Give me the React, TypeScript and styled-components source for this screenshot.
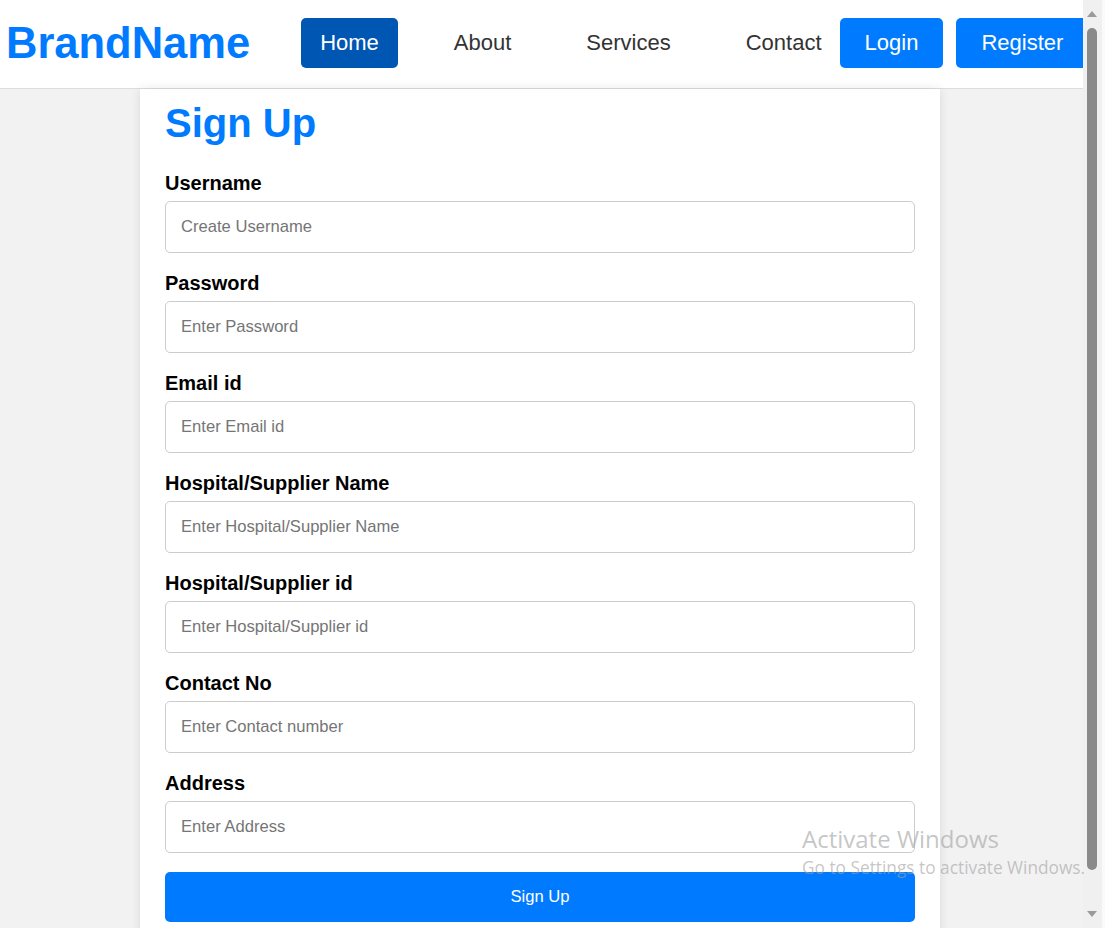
import React from "react";
import styled, { createGlobalStyle } from "styled-components";

const GlobalStyle = createGlobalStyle`
  html, body {
    margin: 0;
    padding: 0;
    height: 100%;
    overflow: hidden;
  }
  body {
    font-family: Arial, "Liberation Sans", sans-serif;
  }
  * { box-sizing: border-box; }
`;

const Shell = styled.div`
  position: relative;
  display: flex;
  height: 100vh;
  width: 100vw;
`;

const Viewport = styled.div`
  flex: 1;
  overflow: hidden;
  background: #f2f2f2;
`;

const Header = styled.header`
  height: 89px;
  background: #ffffff;
  border-bottom: 1px solid #dddddd;
  display: flex;
  align-items: flex-start;
  padding: 18px 0 0 6px;
  white-space: nowrap;
`;

const Brand = styled.div`
  font-size: 43.5px;
  font-weight: 700;
  color: #007bff;
  line-height: 50px;
  margin-right: 51px;
`;

const Nav = styled.nav`
  display: flex;
  gap: 37px;
`;

const NavItem = styled.a<{ $active?: boolean }>`
  display: block;
  height: 50px;
  line-height: 50px;
  padding: 0 19px;
  font-size: 22px;
  border-radius: 5px;
  text-decoration: none;
  color: ${(p) => (p.$active ? "#ffffff" : "#333333")};
  background: ${(p) => (p.$active ? "#0056b3" : "transparent")};
`;

const AuthGroup = styled.div`
  display: flex;
  gap: 13px;
  margin-left: -1px;
`;

const AuthButton = styled.button`
  height: 50px;
  padding: 0 25px;
  border: none;
  border-radius: 5px;
  background: #007bff;
  color: #ffffff;
  font-family: Arial, "Liberation Sans", sans-serif;
  font-size: 22px;
  flex: none;
`;

const Card = styled.main`
  width: 800px;
  margin: 0 0 0 140px;
  background: #ffffff;
  box-shadow: 0 0 10px rgba(0, 0, 0, 0.1);
  padding: 11px 25px 25px;
`;

const Title = styled.h2`
  margin: 0 0 26px;
  font-size: 40px;
  line-height: 46px;
  font-weight: 700;
  color: #007bff;
`;

const Form = styled.form`
  display: flex;
  flex-direction: column;
  gap: 19px;
`;

const Field = styled.div`
  display: flex;
  flex-direction: column;
  gap: 6px;
`;

const Label = styled.label`
  font-size: 20px;
  line-height: 23px;
  font-weight: 700;
  color: #000000;
`;

const Input = styled.input`
  height: 52px;
  width: 100%;
  border: 1px solid #cccccc;
  border-radius: 5px;
  padding: 0 15px;
  font-family: Arial, "Liberation Sans", sans-serif;
  font-size: 16.6px;
  color: #333;
  outline: none;
  &::placeholder {
    color: #757575;
  }
`;

const Submit = styled.button`
  height: 50px;
  width: 100%;
  border: none;
  border-radius: 5px;
  background: #007bff;
  color: #ffffff;
  font-family: Arial, "Liberation Sans", sans-serif;
  font-size: 16.6px;
`;

const Watermark = styled.div`
  position: absolute;
  left: 802px;
  top: 823px;
  color: rgba(160, 160, 160, 0.6);
  font-family: "Open Sans", "Noto Sans", sans-serif;
  pointer-events: none;
  white-space: nowrap;
`;

const WatermarkTitle = styled.div`
  font-size: 24px;
  line-height: 32px;
`;

const WatermarkSub = styled.div`
  font-size: 17.3px;
  line-height: 26px;
`;

const Scrollbar = styled.div`
  width: 22px;
  background: linear-gradient(to right, #f0f0f0 0 19px, #fafafa 19px);
  display: flex;
  flex-direction: column;
  align-items: flex-start;
  padding: 10px 0 10px 4px;
`;

const Arrow = styled.svg`
  display: block;
  width: 10px;
  height: 8px;
  flex: none;
`;

const Thumb = styled.div`
  width: 10px;
  height: 842px;
  margin: 10px 0 auto;
  background: #8a8a8a;
  border-radius: 5px;
`;

const fields = [
  ["Username", "Create Username", "text"],
  ["Password", "Enter Password", "password"],
  ["Email id", "Enter Email id", "email"],
  ["Hospital/Supplier Name", "Enter Hospital/Supplier Name", "text"],
  ["Hospital/Supplier id", "Enter Hospital/Supplier id", "text"],
  ["Contact No", "Enter Contact number", "text"],
  ["Address", "Enter Address", "text"],
];

export default function App() {
  return (
    <>
      <GlobalStyle />
      <Shell>
        <Viewport>
          <Header>
            <Brand>BrandName</Brand>
            <Nav>
              <NavItem $active href="#">Home</NavItem>
              <NavItem href="#">About</NavItem>
              <NavItem href="#">Services</NavItem>
              <NavItem href="#">Contact</NavItem>
            </Nav>
            <AuthGroup>
              <AuthButton>Login</AuthButton>
              <AuthButton>Register</AuthButton>
            </AuthGroup>
          </Header>
          <Card>
            <Title>Sign Up</Title>
            <Form onSubmit={(e) => e.preventDefault()}>
              {fields.map(([label, ph, type]) => (
                <Field key={label}>
                  <Label>{label}</Label>
                  <Input type={type} placeholder={ph} />
                </Field>
              ))}
              <Submit type="submit">Sign Up</Submit>
            </Form>
          </Card>
        </Viewport>
        <Scrollbar>
          <Arrow viewBox="0 0 10 8">
            <polygon points="5,1 10,7 0,7" fill="#9a9a9a" />
          </Arrow>
          <Thumb />
          <Arrow viewBox="0 0 10 8">
            <polygon points="0,1 10,1 5,7" fill="#9a9a9a" />
          </Arrow>
        </Scrollbar>
        <Watermark>
          <WatermarkTitle>Activate Windows</WatermarkTitle>
          <WatermarkSub>Go to Settings to activate Windows.</WatermarkSub>
        </Watermark>
      </Shell>
    </>
  );
}
